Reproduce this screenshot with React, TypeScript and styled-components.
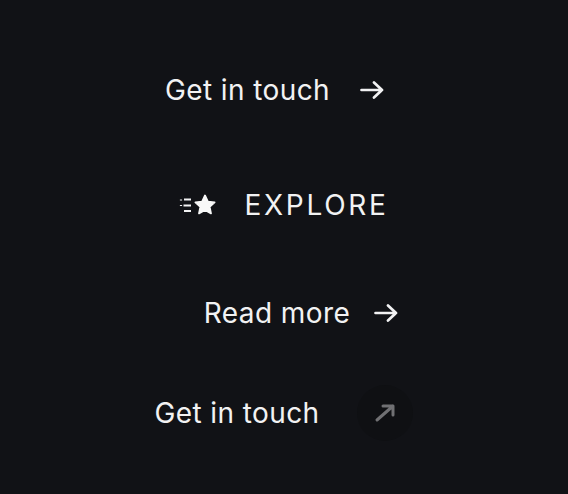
import React from "react";
import styled, { createGlobalStyle } from "styled-components";

const GlobalStyle = createGlobalStyle`
    html, body {
        margin: 0;
        padding: 0;
        background: #111216;
    }

    body {
        font-family: Inter, "Noto Sans", sans-serif;
        color: #f2f2f3;
    }
`;

const Page = styled.main`
    width: 568px;
    height: 494px;
    display: flex;
    flex-direction: column;
    align-items: center;
    padding-top: 70px;
    box-sizing: border-box;
    background: #111216;
`;

const Row = styled.div<{ $height: number; $shift: number; $top: number }>`
    height: ${(p) => p.$height}px;
    margin-top: ${(p) => p.$top}px;
    display: flex;
    align-items: center;
    padding-left: ${(p) => Math.max(p.$shift, 0)}px;
    padding-right: ${(p) => Math.max(-p.$shift, 0)}px;
`;

const Button = styled.button<{ $gap: number }>`
    display: flex;
    align-items: center;
    gap: ${(p) => p.$gap}px;
    padding: 0;
    border: none;
    background: none;
    color: #f2f2f3;
    font-family: Inter, "Noto Sans", sans-serif;
    font-size: 28px;
    font-weight: 400;
    cursor: pointer;
`;

const Label = styled.span<{ $caps?: boolean }>`
    line-height: 40px;
    text-transform: ${(p) => (p.$caps ? "uppercase" : "none")};
    letter-spacing: ${(p) => (p.$caps ? "2.7px" : "0.4px")};
`;

const IconCircle = styled.span`
    width: 56px;
    height: 56px;
    border-radius: 50%;
    background: #0f1013;
    display: flex;
    align-items: center;
    justify-content: center;
`;

const Arrow = () => (
    <svg width="24" height="18" viewBox="0 0 24 18" fill="none">
        <path
            d="M1.5 9H22M14 1.5L22 9L14 16.5"
            stroke="#f2f2f3"
            strokeWidth="2.7"
            strokeLinecap="round"
            strokeLinejoin="round"
        />
    </svg>
);

const DiagonalArrow = () => (
    <svg width="22" height="20" viewBox="0 0 22 20" fill="none">
        <path
            d="M3 17L19 3M9 3H19V12"
            stroke="#707073"
            strokeWidth="3"
            strokeLinecap="round"
            strokeLinejoin="round"
        />
    </svg>
);

// star with speed lines trailing to the left
const StarSpeed = () => (
    <svg width="38" height="24" viewBox="0 0 38 24" fill="none">
        <path d="M2 6.5V7.5M2 12V13M5 6.5H12M4.5 12.5H12M5 18H12" stroke="#f2f2f3" strokeWidth="2.2" />
        <path
            d="M26 2.5L28.9 8.6L35.6 9.3L30.6 13.8L32 20.4L26 17L20 20.4L21.4 13.8L16.4 9.3L23.1 8.6Z"
            fill="#f8f8f8"
            stroke="#f8f8f8"
            strokeWidth="1.8"
            strokeLinejoin="round"
        />
    </svg>
);

const App = () => {
    return (
        <>
            <GlobalStyle />
            <Page>
                <Row $height={40} $shift={-19} $top={0}>
                    <Button $gap={30}>
                        <Label>Get in touch</Label>
                        <Arrow />
                    </Button>
                </Row>
                <Row $height={40} $shift={0} $top={75}>
                    <Button $gap={27}>
                        <StarSpeed />
                        <Label $caps>Explore</Label>
                    </Button>
                </Row>
                <Row $height={40} $shift={34} $top={68}>
                    <Button $gap={24}>
                        <Label>Read more</Label>
                        <Arrow />
                    </Button>
                </Row>
                <Row $height={56} $shift={-1} $top={52}>
                    <Button $gap={37}>
                        <Label>Get in touch</Label>
                        <IconCircle>
                            <DiagonalArrow />
                        </IconCircle>
                    </Button>
                </Row>
            </Page>
        </>
    );
};

export default App;
